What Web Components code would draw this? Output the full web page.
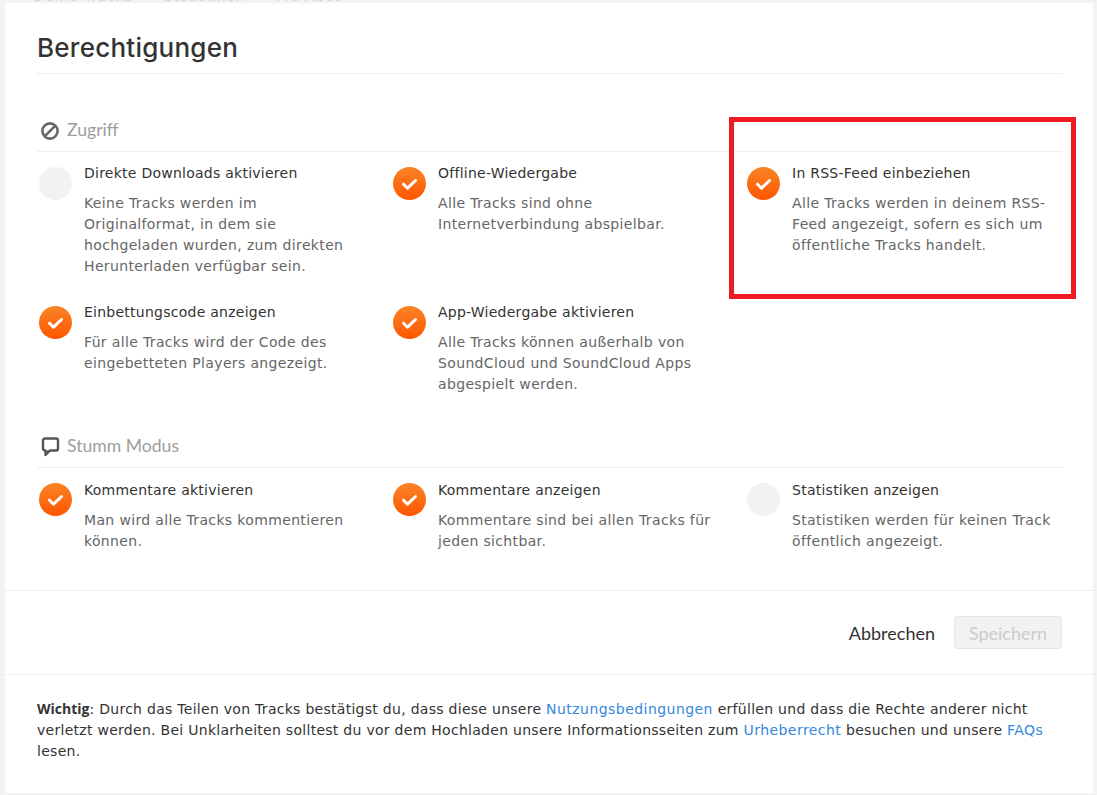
<!DOCTYPE html>
<html lang="de">
<head>
<meta charset="utf-8">
<title>Berechtigungen</title>
<style>
    html, body { margin: 0; height: 100%; }
    body {
        background: #f3f3f3;
        font-family: "DejaVu Sans", sans-serif;
        overflow: hidden;
    }
</style>
</head>
<body>
<perm-backdrop></perm-backdrop>
<perm-modal>
    <perm-section label="Zugriff" icon="block">
        <perm-item title="Direkte Downloads aktivieren" off>Keine Tracks werden im Originalformat, in dem sie hochgeladen wurden, zum direkten Herunterladen verfügbar sein.</perm-item>
        <perm-item title="Offline-Wiedergabe">Alle Tracks sind ohne Internetverbindung abspielbar.</perm-item>
        <perm-item title="In RSS-Feed einbeziehen">Alle Tracks werden in deinem RSS-Feed angezeigt, sofern es sich um öffentliche Tracks handelt.</perm-item>
        <perm-item title="Einbettungscode anzeigen">Für alle Tracks wird der Code des eingebetteten Players angezeigt.</perm-item>
        <perm-item title="App-Wiedergabe aktivieren">Alle Tracks können außerhalb von SoundCloud und SoundCloud Apps abgespielt werden.</perm-item>
    </perm-section>
    <perm-section label="Stumm Modus" icon="comment" style="--text-shift: 1px">
        <perm-item title="Kommentare aktivieren">Man wird alle Tracks kommentieren können.</perm-item>
        <perm-item title="Kommentare anzeigen">Kommentare sind bei allen Tracks für jeden sichtbar.</perm-item>
        <perm-item title="Statistiken anzeigen" off>Statistiken werden für keinen Track öffentlich angezeigt.</perm-item>
    </perm-section>
</perm-modal>

<script>
// faint page behind the dialog, only the tab row peeks out at the top
class PermBackdrop extends HTMLElement {
    constructor() {
        super();
        this.attachShadow({ mode: 'open' });
        this.shadowRoot.innerHTML = `
            <style>
                :host {
                    position: absolute;
                    top: -13px;
                    left: 33px;
                    display: flex;
                    gap: 31px;
                    font: 15.4px "DejaVu Sans", sans-serif;
                    color: #d4d4d4;
                }
            </style>
            <span>Demo Tracks</span><span>Statistiken</span><span>Pro Abos</span>
        `;
    }
}

class PermModal extends HTMLElement {
    constructor() {
        super();
        this.attachShadow({ mode: 'open' });
        this.shadowRoot.innerHTML = `
            <style>
                :host {
                    position: relative;
                    display: block;
                    box-sizing: border-box;
                    width: 1088px;
                    height: 790px;
                    margin: 3px 4px 0 5px;
                    background: #fff;
                    color: #333;
                }
                header {
                    margin: 0 31px 0 32px;
                    height: 71px;
                    border-bottom: 1px solid #eee;
                    box-sizing: border-box;
                }
                h1 {
                    margin: 0;
                    padding-top: 27px;
                    font: 500 26px/36px Inter, sans-serif;
                    letter-spacing: 0.25px;
                    color: #333;
                }
                main {
                    box-sizing: border-box;
                    height: 517px;
                    padding: 41px 31px 0 32px;
                    border-bottom: 1px solid #eee;
                }
                .actions {
                    box-sizing: border-box;
                    height: 84px;
                    padding-right: 31px;
                    display: flex;
                    justify-content: flex-end;
                    align-items: center;
                    gap: 19px;
                    border-bottom: 1px solid #eee;
                    font-family: Lato, sans-serif;
                    font-size: 18px;
                }
                .cancel { color: #333; }
                .save {
                    box-sizing: border-box;
                    width: 108px;
                    height: 33px;
                    display: flex;
                    align-items: center;
                    justify-content: center;
                    border: 1px solid #e5e5e5;
                    border-radius: 3px;
                    background: #f2f2f2;
                    color: #ccc;
                }
                footer {
                    padding: 23px 31px 0 32px;
                    font-size: 14px;
                    line-height: 21px;
                    color: #333;
                    letter-spacing: 0.28px;
                }
                footer b { font-family: "Open Sans", sans-serif; font-weight: 700; letter-spacing: 0; }
                a { color: #38d; text-decoration: none; letter-spacing: 0.45px; }
                /* red marker drawn over the dialog */
                .marker {
                    position: absolute;
                    left: 724px;
                    top: 114px;
                    width: 347px;
                    height: 182px;
                    box-sizing: border-box;
                    border: 5px solid #ed1c24;
                    pointer-events: none;
                }
            </style>
            <header><h1>Berechtigungen</h1></header>
            <main><slot></slot></main>
            <div class="actions">
                <span class="cancel">Abbrechen</span>
                <span class="save">Speichern</span>
            </div>
            <footer><b>Wichtig</b>: Durch das Teilen von Tracks bestätigst du, dass diese unsere <a>Nutzungsbedingungen</a> erfüllen und dass die Rechte anderer nicht verletzt werden. Bei Unklarheiten solltest du vor dem Hochladen unsere Informationsseiten zum <a>Urheberrecht</a> besuchen und unsere <a>FAQs</a> lesen.</footer>
            <div class="marker"></div>
        `;
    }
}

const SECTION_ICONS = {
    block: `<circle cx="10" cy="10" r="7.6" fill="none" stroke="#666" stroke-width="2.6"/><path d="M4.9 15.1 15.1 4.9" stroke="#666" stroke-width="2.6"/>`,
    comment: `<path d="M5 1.5h11a2 2 0 0 1 2 2v8a2 2 0 0 1-2 2H10l-4.5 4.5v-4.5H5a2 2 0 0 1-2-2v-8a2 2 0 0 1 2-2z" fill="none" stroke="#555" stroke-width="2.4" stroke-linejoin="round"/><path d="M5.5 13.5h4l-4 4z" fill="#555"/>`
};

class PermSection extends HTMLElement {
    constructor() {
        super();
        this.attachShadow({ mode: 'open' });
        this.shadowRoot.innerHTML = `
            <style>
                :host { display: block; margin-bottom: 11px; }
                .head {
                    box-sizing: border-box;
                    height: 37px;
                    padding: 0 0 8px 3px;
                    display: flex;
                    align-items: center;
                    gap: 8px;
                    border-bottom: 1px solid #eee;
                    font: 17.6px Lato, sans-serif;
                    color: #9e9e9e;
                }
                svg { width: 19px; height: 20px; flex: none; margin-top: 4px; overflow: visible; }
                .grid {
                    display: grid;
                    grid-template-columns: 354px 354px 317px;
                    padding-top: 11px;
                }
            </style>
            <div class="head"><svg viewBox="0 0 19 20"></svg><span></span></div>
            <div class="grid"><slot></slot></div>
        `;
    }

    connectedCallback() {
        this.shadowRoot.querySelector('span').textContent = this.getAttribute('label');
        this.shadowRoot.querySelector('svg').innerHTML = SECTION_ICONS[this.getAttribute('icon')];
    }
}

class PermItem extends HTMLElement {
    constructor() {
        super();
        this.attachShadow({ mode: 'open' });
        this.shadowRoot.innerHTML = `
            <style>
                :host {
                    display: flex;
                    gap: 12px;
                    padding: 0 0 25px 2px;
                    box-sizing: border-box;
                }
                .dot {
                    flex: none;
                    width: 33px;
                    height: 33px;
                    margin-top: 4px;
                    border-radius: 50%;
                    background: linear-gradient(#fa8526, #ff5500);
                    display: flex;
                    align-items: center;
                    justify-content: center;
                }
                :host([off]) .dot { background: #f2f2f2; }
                :host([off]) svg { display: none; }
                svg { width: 17px; height: 14px; }
                .text { max-width: 278px; padding-top: var(--text-shift, 0); }
                h2 {
                    margin: 0;
                    font: 400 14px/21px "DejaVu Sans", sans-serif;
                    letter-spacing: 0.25px;
                    color: #333;
                }
                p {
                    margin: 9px 0 0;
                    font-size: 14px;
                    line-height: 21px;
                    letter-spacing: 0.35px;
                    color: #666;
                }
            </style>
            <div class="dot"><svg viewBox="0 0 17 14"><path d="M2.5 7.2l4 4L14.5 3.5" fill="none" stroke="#fff" stroke-width="3" stroke-linecap="round" stroke-linejoin="round"/></svg></div>
            <div class="text"><h2></h2><p><slot></slot></p></div>
        `;
    }

    connectedCallback() {
        this.shadowRoot.querySelector('h2').textContent = this.getAttribute('title');
    }
}

customElements.define('perm-backdrop', PermBackdrop);
customElements.define('perm-modal', PermModal);
customElements.define('perm-section', PermSection);
customElements.define('perm-item', PermItem);
</script>
</body>
</html>
